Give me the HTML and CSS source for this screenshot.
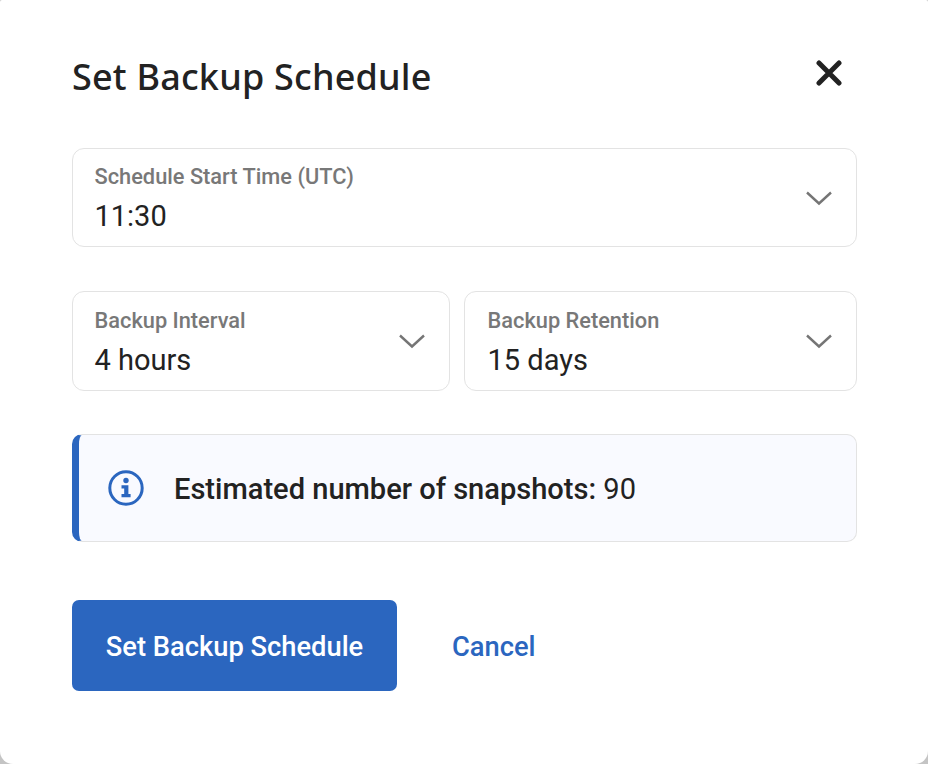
FILE: index.html
```html
<!DOCTYPE html>
<html lang="en">
<head>
<meta charset="utf-8">
<title>Set Backup Schedule</title>
<link rel="stylesheet" href="styles.css">
</head>
<body>
<div class="modal">
  <header class="modal-header">
    <h1 class="title">Set Backup Schedule</h1>
    <button class="close" aria-label="Close">
      <svg width="26" height="26" viewBox="0 0 26 26"><path d="M3 3L23 23M23 3L3 23" fill="none" stroke="#222" stroke-width="5" stroke-linecap="round"/></svg>
    </button>
  </header>
  <div class="field field-full">
    <div class="field-text">
      <div class="label">Schedule Start Time (UTC)</div>
      <div class="value">11:30</div>
    </div>
    <svg class="chev" width="28" height="16" viewBox="0 0 28 16"><path d="M2 2.5L14 13.5L26 2.5" fill="none" stroke="#757575" stroke-width="2.4"/></svg>
  </div>
  <div class="row">
    <div class="field field-interval">
      <div class="field-text">
        <div class="label">Backup Interval</div>
        <div class="value">4 hours</div>
      </div>
      <svg class="chev" width="28" height="16" viewBox="0 0 28 16"><path d="M2 2.5L14 13.5L26 2.5" fill="none" stroke="#757575" stroke-width="2.4"/></svg>
    </div>
    <div class="field field-retention">
      <div class="field-text">
        <div class="label">Backup Retention</div>
        <div class="value">15 days</div>
      </div>
      <svg class="chev" width="28" height="16" viewBox="0 0 28 16"><path d="M2 2.5L14 13.5L26 2.5" fill="none" stroke="#757575" stroke-width="2.4"/></svg>
    </div>
  </div>
  <div class="notice">
    <svg class="info" width="36" height="36" viewBox="0 0 36 36">
      <circle cx="18" cy="18" r="16.2" fill="none" stroke="#2b66bf" stroke-width="3"/>
      <circle cx="18" cy="10.5" r="2.7" fill="#2b66bf"/>
      <path d="M13.5 15.2H20.4V24H22.6V27.2H13.5V24H16.2V18.4H13.5Z" fill="#2b66bf"/>
    </svg>
    <p class="notice-text"><strong>Estimated number of snapshots:</strong> 90</p>
  </div>
  <div class="actions">
    <button class="primary">Set Backup Schedule</button>
    <button class="link">Cancel</button>
  </div>
</div>
</body>
</html>
```
FILE: styles.css
```css
* { box-sizing: border-box; }
html, body { margin: 0; height: 100%; }
body {
  background: #c4c4c4;
  font-family: Roboto, "Liberation Sans", sans-serif;
  color: #222;
  overflow: hidden;
}
.modal {
  width: 928px;
  height: 764px;
  background: #fff;
  border-radius: 2px 2px 13px 13px;
  padding: 50px 71px 0 72px;
}
.modal-header {
  display: flex;
  justify-content: space-between;
  align-items: flex-start;
  height: 98px;
}
.title {
  margin: 0;
  font-family: "Noto Sans", sans-serif;
  font-size: 36px;
  line-height: 54px;
  font-weight: 500;
  letter-spacing: 0.2px;
  color: #222;
}
.close {
  border: 0;
  background: none;
  padding: 0;
  margin: 10px 15px 0 0;
  width: 26px;
  height: 26px;
  display: block;
}
.close svg { display: block; }
.field {
  border: 1px solid #e3e3e3;
  border-radius: 12px;
  background: #fff;
  height: 99px;
  display: flex;
  align-items: center;
  justify-content: space-between;
  padding: 0 23px 0 21.5px;
}
.field-interval { width: 378px; height: 100px; }
.field-retention { width: 393px; height: 100px; padding-left: 22.5px; }
.field-text {
  display: flex;
  flex-direction: column;
  margin-top: 3px;
}
.label {
  font-size: 21.8px;
  line-height: 26px;
  font-weight: 500;
  color: #787878;
}
.value {
  font-size: 29px;
  line-height: 36px;
  margin-top: 8px;
  color: #222;
}
.chev { display: block; flex: none; }
.row {
  display: flex;
  gap: 14px;
  margin-top: 44px;
}
.notice {
  margin-top: 43px;
  height: 108px;
  display: flex;
  align-items: center;
  gap: 30px;
  background: #f9faff;
  border: 1px solid #e3e3e3;
  border-left: 7px solid #2b66bf;
  border-radius: 10px;
  padding-left: 29px;
}
.info { display: block; flex: none; }
.notice-text {
  margin: 2px 0 0;
  font-size: 29.05px;
  line-height: 36px;
  color: #222;
}
.notice-text strong { font-weight: 500; }
.actions {
  display: flex;
  align-items: center;
  gap: 55px;
  margin-top: 58px;
}
.primary {
  width: 325px;
  height: 91px;
  border: 0;
  border-radius: 7px;
  padding: 2px 0 0;
  background: #2b66bf;
  color: #fff;
  font-family: Roboto, sans-serif;
  font-size: 27.3px;
  font-weight: 500;
}
.link {
  border: 0;
  padding: 2px 0 0;
  background: none;
  color: #2b66bf;
  font-family: Roboto, sans-serif;
  font-size: 27.3px;
  font-weight: 500;
}
```
